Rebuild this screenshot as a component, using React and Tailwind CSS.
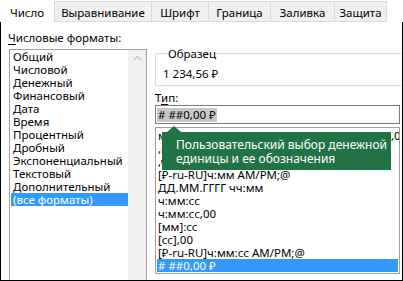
const TABS = [
  { label: 'Число', cls: 'w-[54px] bg-white' },
  { label: 'Выравнивание', cls: 'w-[98px] bg-[#f0f0f0] border border-[#d9d9d9]' },
  { label: 'Шрифт', cls: 'w-[57px] bg-[#f0f0f0] border border-l-0 border-[#d9d9d9]' },
  { label: 'Граница', cls: 'w-[62px] bg-[#f0f0f0] border border-l-0 border-[#d9d9d9]' },
  { label: 'Заливка', cls: 'w-[64px] bg-[#f0f0f0] border border-l-0 border-[#d9d9d9]' },
  { label: 'Защита', cls: 'w-[52px] bg-[#f0f0f0] border border-l-0 border-[#d9d9d9]' },
]

const CATEGORIES = [
  'Общий',
  'Числовой',
  'Денежный',
  'Финансовый',
  'Дата',
  'Время',
  'Процентный',
  'Дробный',
  'Экспоненциальный',
  'Текстовый',
  'Дополнительный',
  '(все форматы)',
]

// первые три строки почти целиком закрыты подсказкой
const FORMATS = [
  'мм:сс,0;[ч]:мм:сс;[мм]:сс;ч:мм:сс,00;мм:сс,0;[ч]:мм:сс;[мм]:сс (ч)',
  ',мм:сс',
  ',ч:мм',
  '[₽-ru-RU]ч:мм AM/PM;@',
  'ДД.ММ.ГГГГ чч:мм',
  'ч:мм:сс',
  'ч:мм:сс,00',
  '[мм]:сс',
  '[сс],00',
  '[₽-ru-RU]ч:мм:сс AM/PM;@',
  '# ##0,00 ₽',
]

export default function App() {
  return (
    <div className="w-[403px] h-[281px] bg-white text-[11.5px] leading-[13px] text-black font-['Noto_Sans','Open_Sans',sans-serif] overflow-hidden">
      {/* Tabs */}
      <div className="flex h-[22px] pt-[1px]">
        {TABS.map((t) => (
          <div
            key={t.label}
            className={`h-[21px] flex items-center justify-center pt-[2px] ${t.cls}`}
          >
            {t.label}
          </div>
        ))}
      </div>

      {/* Panel */}
      <div className="relative flex h-[259px] border-l border-r border-b border-black">
        {/* Left column */}
        <div className="flex flex-col pl-[7px]">
          <div className="mt-[9px] h-[13px]">
            <span className="underline underline-offset-2">Ч</span>исловые форматы:
          </div>
          <div className="mt-[5px] ml-[1px] flex-1 w-[138px] flex border border-[#a0a0a0] border-b-0 pl-[1px]">
            <div className="w-[117px]">
              {CATEGORIES.map((c, i) => (
                <div
                  key={c}
                  className={`h-[13px] pl-[2px] whitespace-nowrap ${
                    i === CATEGORIES.length - 1 ? 'bg-[#3399ff] text-white' : ''
                  }`}
                >
                  {c}
                </div>
              ))}
            </div>
            <div className="w-[18px] bg-[#f0f0f0] flex justify-center pt-[5px]">
              <svg width="9" height="6" viewBox="0 0 9 6">
                <path d="M1 5 L4.5 1.5 L8 5" fill="none" stroke="#c2c2c2" strokeWidth="1.3" />
              </svg>
            </div>
          </div>
        </div>

        {/* Right column */}
        <div className="ml-[8px] flex-1 flex flex-col">
          <fieldset className="mt-[25px] border border-r-0 border-[#dcdcdc] pl-[7px] pb-[5px]">
            <legend className="ml-[5px] px-0 leading-[13px]">Образец</legend>
            <div className="mt-[7px] h-[13px]">1 234,56 ₽</div>
          </fieldset>

          <div className="mt-[5px] h-[13px]">
            Т<span className="underline underline-offset-2">и</span>п:
          </div>
          <div className="mt-[1px] w-[245px] h-[19px] border border-[#7a7a7a] flex items-center pl-[1px]">
            <span className="bg-[#c8c8c8] px-[1px] leading-[14px]">
              # ##0,00 ₽
            </span>
          </div>

          <div className="mt-[3px] w-[245px] h-[147px] border border-[#a0a0a0] pl-[1px] pt-[1px] overflow-hidden">
            {FORMATS.map((f, i) => (
              <div
                key={f}
                className={`h-[13px] pl-[1px] whitespace-nowrap overflow-hidden ${
                  i === FORMATS.length - 1 ? 'bg-[#3399ff] text-white mr-[1px]' : ''
                }`}
              >
                {f}
              </div>
            ))}
          </div>
        </div>

        {/* Tooltip */}
        <div className="absolute left-[161px] top-[110px] w-[229px] h-[38px] bg-[#217346] text-white text-[12px] leading-[14px] pl-[14px] pt-[6px] whitespace-nowrap">
          <svg
            className="absolute left-[5px] -top-[6px]"
            width="14"
            height="6"
            viewBox="0 0 14 6"
          >
            <path d="M0 6 L7 0 L14 6 Z" fill="#217346" />
          </svg>
          <div>Пользовательский выбор денежной</div>
          <div>единицы и ее обозначения</div>
        </div>
      </div>
    </div>
  )
}
